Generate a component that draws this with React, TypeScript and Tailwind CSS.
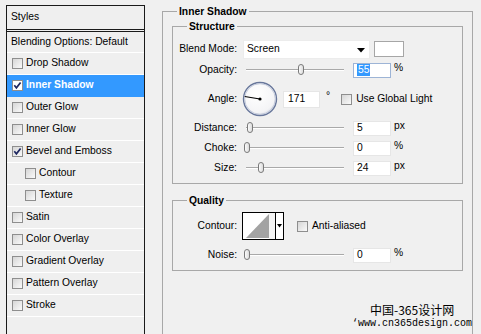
import React from "react";

function Check({ checked, white }: { checked?: boolean; white?: boolean }) {
  return (
    <span
      className={`w-[11px] h-[11px] border border-[#8e8e8e] flex items-center justify-center shrink-0 ${
        white ? "bg-white" : "bg-linear-to-br from-[#d6d6d6] to-[#fafafa]"
      }`}
    >
      {checked && (
        <svg width="9" height="9" viewBox="0 0 9 9">
          <path d="M1.3 4.3 L3.4 6.8 L7.6 1.4" fill="none" stroke="#1d2660" strokeWidth="1.7" />
        </svg>
      )}
    </span>
  );
}

function Item({
  label,
  checked,
  indent,
  selected,
}: {
  label: string;
  checked?: boolean;
  indent?: boolean;
  selected?: boolean;
}) {
  return (
    <div
      className={`h-[22px] flex items-center border-b ${
        selected ? "bg-[#3399ff] border-[#3399ff] text-white font-bold" : "border-white"
      } ${indent ? "pl-[18px]" : "pl-[5px]"}`}
    >
      <Check checked={checked} white={selected} />
      <span className="ml-[3px]">{label}</span>
    </div>
  );
}

function Thumb() {
  return (
    <svg width="8" height="11" viewBox="0 0 8 11">
      <defs>
        <linearGradient id="tg" x1="0" y1="0" x2="1" y2="0">
          <stop offset="0" stopColor="#ffffff" />
          <stop offset="1" stopColor="#d8d8d8" />
        </linearGradient>
      </defs>
      <path
        d="M1.5 3 Q1.5 0.5 4 0.5 Q6.5 0.5 6.5 3 V8 Q6.5 10.5 4 10.5 Q1.5 10.5 1.5 8 Z"
        fill="url(#tg)"
        stroke="#7a7a7a"
        strokeWidth="1"
      />
    </svg>
  );
}

function Slider({ pos, ml = "ml-[9px]" }: { pos: number; ml?: string }) {
  return (
    <div className={`relative w-[98px] h-[20px] shrink-0 ${ml}`}>
      <div className="absolute left-0 right-0 top-[9px] h-[2px] border-t border-[#a9a9a9] border-b border-b-white" />
      <div className="absolute top-[4px]" style={{ left: pos }}>
        <Thumb />
      </div>
    </div>
  );
}

function NumInput({ value, unit, focus }: { value: string; unit: string; focus?: boolean }) {
  return (
    <>
      <div
        className={`ml-[9px] w-[38px] h-[15px] bg-white border flex items-center pl-[3px] shrink-0 ${
          focus ? "border-[#9db4d6]" : "border-[#e6e6e6]"
        }`}
      >
        {focus ? <span className="bg-[#3399ff] text-white px-[1px] leading-[12px]">{value}</span> : <span>{value}</span>}
      </div>
      <span className="ml-[3px] -mt-[3px]">{unit}</span>
    </>
  );
}

function Label({ children }: { children: React.ReactNode }) {
  return <span className="w-[64px] text-right shrink-0">{children}</span>;
}

function Dial() {
  const a = (171 * Math.PI) / 180;
  const x2 = 18 + Math.cos(a) * 15.5;
  const y2 = 18 - Math.sin(a) * 15.5;
  return (
    <svg width="36" height="36" viewBox="0 0 36 36" className="ml-[5px] shrink-0">
      <defs>
        <radialGradient id="dg" cx="0.4" cy="0.35" r="0.7">
          <stop offset="0" stopColor="#ffffff" />
          <stop offset="0.8" stopColor="#f4f4f6" />
          <stop offset="1" stopColor="#d9dce6" />
        </radialGradient>
      </defs>
      <circle cx="18" cy="18" r="16.5" fill="url(#dg)" stroke="#68779b" strokeWidth="1.4" />
      <circle cx="18" cy="18" r="15.3" fill="none" stroke="#b9c1d6" strokeWidth="0.8" />
      <line x1="18" y1="18" x2={x2} y2={y2} stroke="#000" strokeWidth="1.1" />
      <circle cx="18" cy="18" r="1.6" fill="#000" />
    </svg>
  );
}

export default function App() {
  return (
    <div className="relative w-[481px] h-[334px] overflow-hidden bg-[#f0f0f0] text-black font-['Liberation_Sans',Arial,sans-serif] text-[10.3px] leading-none flex items-start pt-[5px] pl-[6px]">
      {/* Left styles list */}
      <div className="w-[139px] h-[400px] border border-b-0 border-[#1a1a1a] shrink-0 bg-[#efefef]">
        <div className="h-[23px] flex items-center pl-[4px]">Styles</div>
        <div className="h-[1px] bg-[#1a1a1a]" />
        <div className="h-[1px] bg-[#f0f0f0]" />
        <div className="h-[1px] bg-[#1a1a1a]" />
        <div className="h-[21px] flex items-center pl-[4px] border-b border-white">Blending Options: Default</div>
        <Item label="Drop Shadow" />
        <Item label="Inner Shadow" checked selected />
        <Item label="Outer Glow" />
        <Item label="Inner Glow" />
        <Item label="Bevel and Emboss" checked />
        <Item label="Contour" indent />
        <Item label="Texture" indent />
        <Item label="Satin" />
        <Item label="Color Overlay" />
        <Item label="Gradient Overlay" />
        <Item label="Pattern Overlay" />
        <Item label="Stroke" />
      </div>

      {/* Right: Inner Shadow group */}
      <fieldset className="ml-[17px] w-[311px] h-[400px] border border-[#a8a8a8] shrink-0">
        <legend className="ml-[14px] px-[2px] h-[13px] leading-[13px] font-bold">Inner Shadow</legend>

        <fieldset className="mt-[2px] ml-[9px] w-[291px] border border-[#a8a8a8] pt-[5px] pb-[5px]">
          <legend className="ml-[14px] px-[2px] h-[13px] leading-[13px] font-bold">Structure</legend>

          <div className="flex items-center h-[22px]">
            <Label>Blend Mode:</Label>
            <div className="relative ml-[6px] w-[127px] h-[19px] bg-white border border-[#ececec] flex items-center pl-[3px] shrink-0">
              Screen
              <svg width="8" height="5" viewBox="0 0 8 5" className="absolute right-[4px] top-[7px]">
                <path d="M0 0 H8 L4 4.5 Z" fill="#000" />
              </svg>
            </div>
            <div className="ml-[4px] w-[30px] h-[16px] bg-white border border-[#a6a6a6] shrink-0" />
          </div>

          <div className="flex items-center h-[20px]">
            <Label>Opacity:</Label>
            <Slider pos={51} />
            <NumInput value="55" unit="%" focus />
          </div>

          <div className="flex items-center h-[38px]">
            <Label>Angle:</Label>
            <Dial />
            <div className="ml-[5px] w-[37px] h-[17px] bg-white border border-[#e6e6e6] flex items-center pl-[4px] shrink-0">171</div>
            <span className="ml-[6px] -mt-[6px]">°</span>
            <span className="ml-[11px]">
              <Check />
            </span>
            <span className="ml-[4px]">Use Global Light</span>
          </div>

          <div className="flex items-center h-[20px]">
            <Label>Distance:</Label>
            <Slider pos={0} />
            <NumInput value="5" unit="px" />
          </div>
          <div className="flex items-center h-[20px]">
            <Label>Choke:</Label>
            <Slider pos={-3} />
            <NumInput value="0" unit="%" />
          </div>
          <div className="flex items-center h-[20px]">
            <Label>Size:</Label>
            <Slider pos={11} />
            <NumInput value="24" unit="px" />
          </div>
        </fieldset>

        <fieldset className="mt-[10px] ml-[9px] w-[291px] border border-[#a8a8a8] pt-[5px] pb-[5px]">
          <legend className="ml-[14px] px-[2px] h-[13px] leading-[13px] font-bold">Quality</legend>
          <div className="flex items-center h-[28px]">
            <Label>Contour:</Label>
            <div className="ml-[5px] w-[42px] h-[28px] border border-black bg-white flex shrink-0">
              <svg width="32" height="26" viewBox="0 0 32 26" className="shrink-0">
                <rect x="0" y="0" width="32" height="26" fill="#fff" />
                <path d="M3 25 L26 1 V25 Z" fill="#a3a3a3" />
                <rect x="26" y="0" width="6" height="26" fill="#f4f4f4" />
              </svg>
              <div className="flex-1 border-l border-black flex items-center justify-center">
                <svg width="5" height="4" viewBox="0 0 5 4">
                  <path d="M0 0 H5 L2.5 3.5 Z" fill="#000" />
                </svg>
              </div>
            </div>
            <span className="ml-[13px]">
              <Check />
            </span>
            <span className="ml-[4px]">Anti-aliased</span>
          </div>
          <div className="flex items-center h-[20px] mt-[5px]">
            <Label>Noise:</Label>
            <Slider pos={-3} />
            <NumInput value="0" unit="%" />
          </div>
        </fieldset>
      </fieldset>

      {/* watermark */}
      <div className="absolute left-[370px] top-[304px] text-[12px] leading-none font-['Noto_Sans_CJK_SC',sans-serif] text-black">
        中国-365设计网
      </div>
      <div className="absolute left-[352px] top-[319px] text-[10px] leading-none font-['Liberation_Mono',monospace] text-black bg-[#f0f0f0]">
        ‘www.cn365design.com
      </div>
    </div>
  );
}
